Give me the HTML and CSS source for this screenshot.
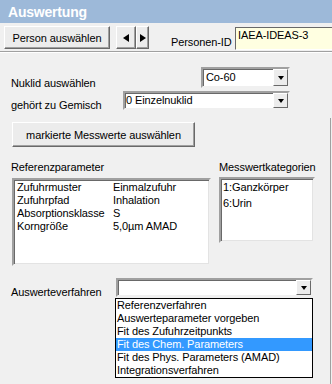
FILE: index.html
```html
<!DOCTYPE html>
<html lang="de">
<head>
  <meta charset="UTF-8" />
  <title>Auswertung</title>
  <link rel="stylesheet" href="styles.css">
</head>
<body>
  <div class="window">
    <div class="titlebar">Auswertung</div>

    <div class="toolbar">
      <button class="btn btn-person">Person auswählen</button>
      <div class="nav">
        <button class="btn btn-prev"><span class="tri-left"></span></button>
        <button class="btn btn-next"><span class="tri-right"></span></button>
      </div>
      <span class="toolbar-label">Personen-ID</span>
      <div class="id-field">IAEA-IDEAS-3</div>
    </div>

    <div class="panel">
      <div class="row row-nuklid">
        <span class="label label-nuklid">Nuklid auswählen</span>
        <div class="combo combo-nuklid">
          <span class="combo-text">Co-60</span>
          <span class="combo-btn"><span class="tri-down"></span></span>
        </div>
      </div>

      <div class="row row-gemisch">
        <span class="label label-gemisch">gehört zu Gemisch</span>
        <div class="combo combo-gemisch">
          <span class="combo-text">0 Einzelnuklid</span>
          <span class="combo-btn"><span class="tri-down"></span></span>
        </div>
      </div>

      <button class="btn btn-messwerte">markierte Messwerte auswählen</button>

      <div class="columns">
        <div class="col col-ref">
          <div class="col-title">Referenzparameter</div>
          <div class="listbox box-ref">
            <table class="params">
              <tr><td>Zufuhrmuster</td><td>Einmalzufuhr</td></tr>
              <tr><td>Zufuhrpfad</td><td>Inhalation</td></tr>
              <tr><td>Absorptionsklasse</td><td>S</td></tr>
              <tr><td>Korngröße</td><td>5,0µm AMAD</td></tr>
            </table>
          </div>
        </div>
        <div class="col col-kat">
          <div class="col-title">Messwertkategorien</div>
          <div class="listbox box-kat">
            <div class="kat-item">1:Ganzkörper</div>
            <div class="kat-item">6:Urin</div>
          </div>
        </div>
      </div>

      <div class="row row-verfahren">
        <span class="label label-verfahren">Auswerteverfahren</span>
        <div class="combo combo-verfahren">
          <span class="combo-text"></span>
          <span class="combo-btn"><span class="tri-down"></span></span>
          <ul class="dropdown">
            <li>Referenzverfahren</li>
            <li>Auswerteparameter vorgeben</li>
            <li>Fit des Zufuhrzeitpunkts</li>
            <li class="selected">Fit des Chem. Parameters</li>
            <li>Fit des Phys. Parameters (AMAD)</li>
            <li>Integrationsverfahren</li>
          </ul>
        </div>
      </div>
    </div>
  </div>
</body>
</html>
```

FILE: styles.css
```css
* {
  box-sizing: border-box;
}

body {
  margin: 0;
  background: #f0f0f0;
  font-family: "Liberation Sans", Arial, sans-serif;
  font-size: 11px;
  letter-spacing: -0.1px;
  color: #000;
  overflow: hidden;
}

.window {
  width: 332px;
  height: 384px;
  position: relative;
  overflow: hidden;
}

.window::after {
  content: "";
  position: absolute;
  right: 1px;
  top: 118px;
  bottom: 0;
  border-right: 1px solid #a0a0a0;
}

.titlebar {
  height: 23px;
  background: #9db9d9;
  color: #fff;
  font-weight: bold;
  font-size: 14px;
  line-height: 24px;
  padding-left: 8px;
  letter-spacing: -0.2px;
}

/* toolbar */
.toolbar {
  height: 29px;
  display: flex;
  align-items: flex-start;
  padding: 3px 0 0 4px;
  border-bottom: 1px solid #a0a0a0;
  box-shadow: 0 1px #fff;
}

.toolbar > * {
  flex: none;
}

.btn {
  font-family: inherit;
  font-size: 11px;
  letter-spacing: -0.1px;
  color: #000;
  background: #ececec;
  border: 1px solid;
  border-color: #fff #696969 #696969 #fff;
  box-shadow: inset -1px -1px #a0a0a0;
  padding: 0;
  margin: 0;
}

.btn-person {
  width: 106px;
  height: 23px;
}

.nav {
  display: flex;
  margin-left: 6px;
}

.btn-prev {
  width: 20px;
  height: 23px;
  display: flex;
  align-items: center;
  justify-content: center;
}

.btn-next {
  width: 13px;
  height: 23px;
  display: flex;
  align-items: center;
  justify-content: center;
}

.tri-left {
  width: 0;
  height: 0;
  border-top: 4px solid transparent;
  border-bottom: 4px solid transparent;
  border-right: 6px solid #000;
}

.tri-right {
  width: 0;
  height: 0;
  border-top: 4px solid transparent;
  border-bottom: 4px solid transparent;
  border-left: 6px solid #000;
}

.toolbar-label {
  width: 64px;
  margin-left: 22px;
  margin-top: 10px;
  line-height: 13px;
  white-space: nowrap;
}

.id-field {
  width: 100px;
  height: 23px;
  margin-top: 1px;
  background: #ffffe1;
  border: 1px solid;
  border-color: #696969 #fff #fff #696969;
  padding: 1px 0 0 2px;
  line-height: 13px;
  white-space: nowrap;
}

/* panel */
.panel {
  padding: 15px 0 0 11px;
}

.row {
  display: flex;
  align-items: flex-end;
}

.row > * {
  flex: none;
}

.label {
  line-height: 13px;
  margin-bottom: -2px;
  white-space: nowrap;
}

.label-nuklid {
  width: 190px;
}

.label-gemisch {
  width: 112px;
}

.label-verfahren {
  width: 105px;
}

.row-gemisch {
  margin-top: 3px;
}

.row-verfahren {
  margin-top: 12px;
}

.combo {
  position: relative;
  display: flex;
  background: #fff;
  border: 2px solid;
  border-color: #a0a0a0 #f0f0f0 #f0f0f0 #a0a0a0;
  box-shadow: inset 1px 1px #696969;
}

.combo-nuklid {
  width: 89px;
  height: 21px;
}

.combo-gemisch {
  width: 167px;
  height: 19px;
}

.combo-verfahren {
  width: 197px;
  height: 19px;
}

.combo-text {
  flex: 1;
  line-height: 15px;
  padding-left: 1px;
  white-space: nowrap;
}

.combo-nuklid .combo-text {
  padding-left: 3px;
  line-height: 17px;
}

.combo-btn {
  width: 15px;
  background: #ececec;
  border: 1px solid;
  border-color: #fff #696969 #696969 #fff;
  display: flex;
  align-items: center;
  justify-content: center;
}

.tri-down {
  width: 0;
  height: 0;
  border-left: 3px solid transparent;
  border-right: 3px solid transparent;
  border-top: 4px solid #000;
}

.btn-messwerte {
  display: block;
  width: 183px;
  height: 25px;
  margin: 12px 0 0 1px;
}

/* lists */
.columns {
  display: flex;
  margin-top: 14px;
}

.col-title {
  line-height: 13px;
  white-space: nowrap;
}

.col-kat {
  margin-left: 8px;
}

.listbox {
  background: #fff;
  border: 2px solid;
  border-color: #a0a0a0 #f0f0f0 #f0f0f0 #a0a0a0;
  box-shadow: inset 1px 1px #696969, inset -1px -1px #e3e3e3;
}

.box-ref {
  width: 199px;
  height: 88px;
  margin: 4px 0 0 1px;
  padding: 1px 0 0 3px;
}

.box-kat {
  width: 96px;
  height: 66px;
  margin-top: 3px;
  padding: 0 0 0 2px;
}

.params {
  border-collapse: collapse;
}

.params td {
  padding: 0;
  line-height: 13px;
  white-space: nowrap;
}

.params td:first-child {
  width: 96px;
}

.kat-item {
  line-height: 16px;
}

/* open dropdown */
.dropdown {
  position: absolute;
  left: -3px;
  top: 18px;
  width: 198px;
  margin: 0;
  padding: 0;
  list-style: none;
  background: #fff;
  border: 1px solid #000;
  z-index: 2;
}

.dropdown li {
  line-height: 13px;
  padding-left: 1px;
  white-space: nowrap;
}

.dropdown .selected {
  background: #3399ff;
  color: #fff;
}
```
